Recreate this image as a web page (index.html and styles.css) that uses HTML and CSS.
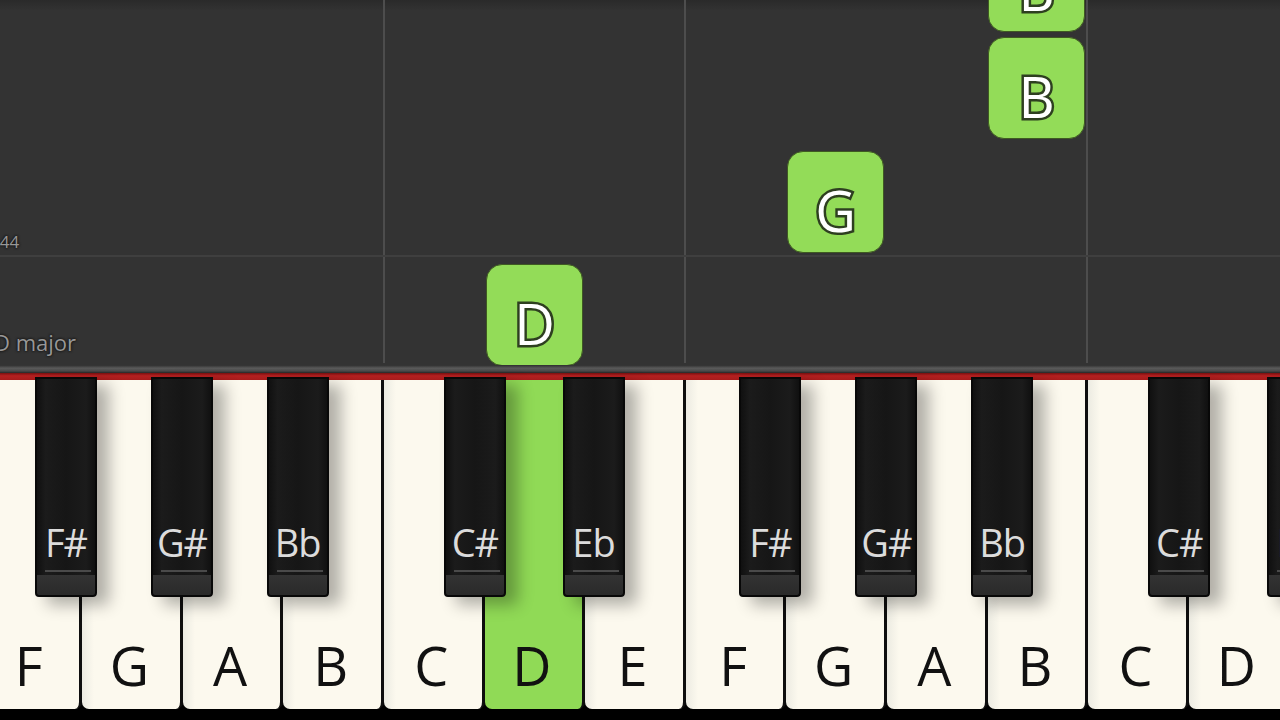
FILE: index.html
```html
<!DOCTYPE html>
<html>
<head>
<meta charset="utf-8">
<link rel="stylesheet" href="styles.css">
</head>
<body>
<div class="screen">
  <div class="roll">
    <div class="roll-top"></div>
    <div class="vline v1"></div>
    <div class="vline v2"></div>
    <div class="vline v3"></div>
    <div class="hline"></div>
    <span class="lbl tempo">144</span>
    <span class="lbl keyname">D major</span>
    <div class="note n-d">D</div>
    <div class="note n-g">G</div>
    <div class="note n-b">B</div>
    <div class="note n-b2">B</div>
  </div>
  <div class="rail"></div>
  <div class="redline"></div>
  <div class="keyboard">
    <div class="wkey">F<div class="bkey bk-f">F#</div></div>
    <div class="wkey">G<div class="bkey bk-g">G#</div></div>
    <div class="wkey">A<div class="bkey bk-a">Bb</div></div>
    <div class="wkey">B</div>
    <div class="wkey">C<div class="bkey bk-c">C#</div></div>
    <div class="wkey active">D<div class="bkey bk-d">Eb</div></div>
    <div class="wkey">E</div>
    <div class="wkey">F<div class="bkey bk-f">F#</div></div>
    <div class="wkey">G<div class="bkey bk-g">G#</div></div>
    <div class="wkey">A<div class="bkey bk-a">Bb</div></div>
    <div class="wkey">B</div>
    <div class="wkey">C<div class="bkey bk-c">C#</div></div>
    <div class="wkey">D<div class="bkey bk-d">Eb</div></div>
  </div>
</div>
</body>
</html>
```
FILE: styles.css
```css
html, body {
  margin: 0;
  padding: 0;
  background: #000;
  overflow: hidden;
}
.screen {
  width: 1280px;
  height: 720px;
  overflow: hidden;
  font-family: "Open Sans", "Noto Sans", sans-serif;
  display: flex;
  flex-direction: column;
}
.roll {
  position: relative;
  height: 365px;
  flex: 0 0 365px;
  background: #333333;
  overflow: hidden;
}
.roll-top {
  height: 10px;
  background: linear-gradient(#2a2a2a, #323232);
}
.vline {
  position: absolute;
  top: 0;
  bottom: 2px;
  width: 2px;
  background: #4d4d4d;
}
.v1 { left: 383px; }
.v2 { left: 684px; }
.v3 { left: 1086px; }
.hline {
  position: absolute;
  left: 0;
  right: 0;
  top: 255px;
  height: 2px;
  background: #3f3f3f;
}
.lbl {
  position: absolute;
  color: #979797;
  text-shadow: 0 0 2px #111, 0 0 3px #111;
  line-height: 1;
  white-space: nowrap;
}
.tempo {
  left: -10px;
  top: 233px;
  font-size: 17px;
}
.keyname {
  left: -6px;
  top: 331px;
  font-size: 22px;
}
.note {
  position: absolute;
  width: 97px;
  height: 102px;
  box-sizing: border-box;
  border: 1px solid #3f5a22;
  border-radius: 16px;
  background: #93dc58;
  color: #fff;
  font-size: 56px;
  line-height: 56px;
  text-align: center;
  padding-top: 30px;
  -webkit-text-stroke: 5px #2e3f20;
  paint-order: stroke fill;
}
.n-d { left: 486px; top: 264px; }
.n-g { left: 787px; top: 151px; }
.n-b { left: 988px; top: 37px; }
.n-b2 { left: 988px; top: -70px; }
.rail {
  flex: 0 0 8px;
  background: linear-gradient(#2e2e2e 0%, #5a5a5a 40%, #4a4a4a 75%, #262626 100%);
}
.redline {
  flex: 0 0 7px;
  background: linear-gradient(#7a1010, #b42020 40%, #a81c1c);
}
.keyboard {
  flex: 0 0 340px;
  display: flex;
  align-items: flex-start;
  margin-left: -18.6px;
  background: #000;
}
.wkey {
  position: relative;
  flex: 0 0 100.64px;
  height: 329px;
  box-sizing: border-box;
  border-right: 3px solid #0e0e0e;
  border-radius: 0 0 7px 7px;
  background: linear-gradient(90deg, #ecebe2 0px, #fcf9ee 12px, #fcf9ee 100%);
  color: #111;
  font-size: 54px;
  line-height: 54px;
  text-align: center;
  padding-top: 258px;
  padding-right: 3px;
}
.wkey.active {
  background: #90da56;
}
.bkey {
  position: absolute;
  top: -3px;
  width: 62px;
  height: 220px;
  box-sizing: border-box;
  border: 2px solid #080808;
  border-radius: 0 0 4px 4px;
  background:
    linear-gradient(#4a4a4a, #4a4a4a) 8px 191px / 46px 2px no-repeat,
    linear-gradient(#333, #282828) 0 196px / 100% 24px no-repeat,
    linear-gradient(90deg, #101010, #1b1b1b 15%, #161616 50%, #1b1b1b 85%, #101010);
  box-shadow: 12px 8px 16px rgba(0, 0, 0, 0.3);
  color: #dcdcdc;
  font-size: 38px;
  line-height: 38px;
  text-align: center;
  padding-top: 144px;
  letter-spacing: -1px;
  z-index: 2;
}
.bk-f { left: 53.6px; }
.bk-g { left: 69px; }
.bk-a { left: 84px; }
.bk-c { left: 60px; }
.bk-d { left: 78px; }
```
